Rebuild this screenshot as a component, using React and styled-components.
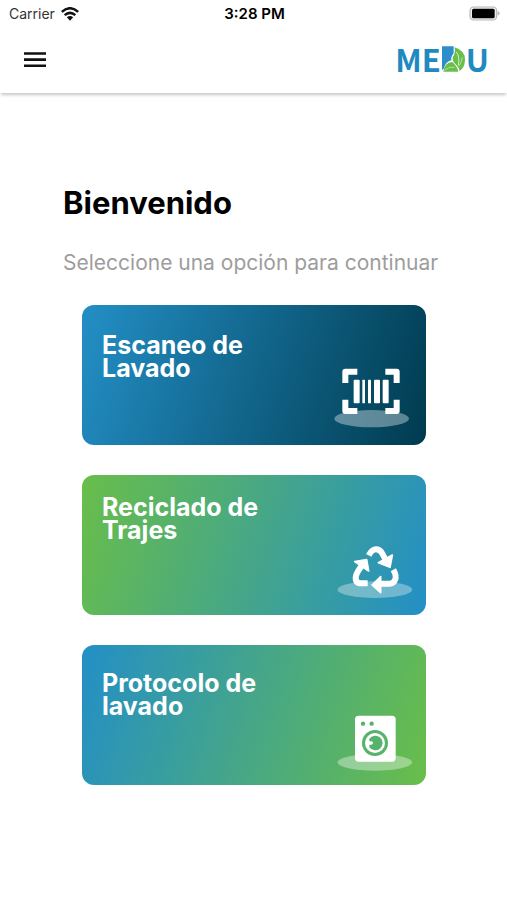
import React from 'react';
import styled, { createGlobalStyle } from 'styled-components';

const blue = '#238fc6';
const green = '#69be49';
const navy = '#003b4f';

export default function App() {
  return (
    <>
      <GlobalStyle />
      <StatusBar>
        <Carrier>
          <span>Carrier</span>
          <WifiIcon />
        </Carrier>
        <Clock>3:28 PM</Clock>
        <BatteryBox>
          <BatteryIcon />
        </BatteryBox>
      </StatusBar>

      <Header>
        <MenuButton type='button' aria-label='Menú'>
          <svg width='24' height='18' viewBox='0 0 24 18' aria-hidden='true'>
            <path d='M1 2.5H23M1 8.6H23M1 14.7H23' stroke='#111' strokeWidth='2.6' />
          </svg>
        </MenuButton>
        <Logo href='#inicio'>
          <span>ME</span>
          <LeafIcon />
          <span>U</span>
        </Logo>
      </Header>

      <Main>
        <Title>Bienvenido</Title>
        <Subtitle>Seleccione una opción para continuar</Subtitle>
        <CardList>
          <Card type='button' $from={blue} $to={navy}>
            <CardTitle $top='29px'>Escaneo de Lavado</CardTitle>
            <BarcodeIcon />
          </Card>
          <Card type='button' $from={green} $to={blue}>
            <CardTitle $top='21px'>Reciclado de Trajes</CardTitle>
            <RecycleIcon />
          </Card>
          <Card type='button' $from={blue} $to={green}>
            <CardTitle $top='27px'>Protocolo de lavado</CardTitle>
            <WasherIcon />
          </Card>
        </CardList>
      </Main>
    </>
  );
}

function WifiIcon() {
  return (
    <svg width='18' height='14' viewBox='0 0 54 42' aria-hidden='true'>
      <g fill='none' stroke='#111' strokeWidth='7.5'>
        <path d='M2.5 14.5Q27 -7 51.5 14.5' />
        <path d='M11 24.5Q27 10.5 43 24.5' />
      </g>
      <path d='M17.5 31Q27 23 36.5 31L27 41Z' fill='#111' />
    </svg>
  );
}

function BatteryIcon() {
  return (
    <svg width='31' height='15' viewBox='0 0 93 45' aria-hidden='true'>
      <rect x='3' y='3' width='80' height='39' rx='11' fill='#eee' stroke='#b5b5b5' strokeWidth='3.5' />
      <rect x='9' y='8' width='68' height='29' rx='5' fill='#000' />
      <path d='M86 15Q92 18 92 22Q92 26 86 29Z' fill='#b5b5b5' />
    </svg>
  );
}

function LeafIcon() {
  return (
    <svg width='25' height='26' viewBox='0 0 75 78' aria-hidden='true'>
      <path d='M3 1H38V22Q29 32 31 43Q14 47 8 68L3 72Z' fill='#2c8fc9' />
      <path
        d='M41 4Q73 14 72 42Q71 65 56 75Q55 66 48 59Q35 48 35 39Q35 32 40 25Q43 17 41 4Z'
        fill={green}
      />
      <path d='M46 18Q57 32 52 58' fill='none' stroke='#d7efca' strokeWidth='3' />
      <path d='M64 34Q62 49 54 61' fill='none' stroke='#d7efca' strokeWidth='2' />
      <path d='M7 77Q11 49 34 48Q49 61 52 77Z' fill={green} />
      <path d='M10 73Q24 60 40 64' fill='none' stroke='#d7efca' strokeWidth='2' />
    </svg>
  );
}

function BarcodeIcon() {
  return (
    <CardIcon viewBox='24 16 240 207' aria-hidden='true'>
      <ellipse cx='140' cy='189' rx='112' ry='26' fill='#fff' fillOpacity='0.36' />
      <g fill='none' stroke='#fff' strokeWidth='18' strokeLinejoin='round'>
        <path d='M61 82V48H97' />
        <path d='M181 48H215V82' />
        <path d='M61 132V166H97' />
        <path d='M181 166H215V132' />
      </g>
      <g fill='#fff'>
        <rect x='86' y='72' width='18' height='71' rx='3' />
        <rect x='112' y='72' width='8' height='71' rx='2' />
        <rect x='129' y='72' width='9' height='71' rx='2' />
        <rect x='147' y='72' width='18' height='71' rx='3' />
        <rect x='173' y='72' width='18' height='71' rx='3' />
      </g>
    </CardIcon>
  );
}

function RecycleIcon() {
  return (
    <CardIcon viewBox='24 -13 240 207' aria-hidden='true'>
      <ellipse cx='149.5' cy='163' rx='112' ry='25' fill='#fff' fillOpacity='0.33' />
      <g fill='none' stroke='#fff' strokeWidth='18'>
        <path d='M131 60Q141 42 153 42Q165 42 172 55L183 75' />
        <path d='M128 144H108Q88 143 93 121Q95 112 110 91' />
        <path d='M205 103Q216 122 210 134Q205 145 194 145H162' />
      </g>
      <g fill='#fff' stroke='#fff' strokeWidth='5' strokeLinejoin='round'>
        <path d='M202 59L195 96L160 82Z' />
        <path d='M89 79L125 73L131 107Z' />
        <path d='M167 124V172L141 149Z' />
      </g>
    </CardIcon>
  );
}

function WasherIcon() {
  return (
    <CardIcon viewBox='24 -11 240 207' aria-hidden='true'>
      <ellipse cx='149.5' cy='173' rx='112' ry='25' fill='#fff' fillOpacity='0.36' />
      <rect x='90' y='33' width='122' height='138' rx='11' fill='#fff' />
      <g fill='#57b36b'>
        <circle cx='114' cy='57' r='6.5' />
        <circle cx='140' cy='57' r='6.5' />
        <circle cx='150' cy='115' r='39' />
      </g>
      <circle cx='150' cy='115' r='30' fill='#fff' />
      <path
        d='M133 102A22 22 0 1 1 133 128L133 120H139Q144 119 144 115Q144 111 139 110H133Z'
        fill='#57b36b'
      />
    </CardIcon>
  );
}

const GlobalStyle = createGlobalStyle`
  * {
    box-sizing: border-box;
  }

  body {
    margin: 0;
    background-color: #fff;
    color: #000;
    font-family: Inter, 'Liberation Sans', sans-serif;
  }
`;

const StatusBar = styled.div`
  display: grid;
  grid-template-columns: 1fr auto 1fr;
  align-items: center;
  height: 27px;
  padding: 0 7px 0 9px;
  font-size: 14px;
`;

const Carrier = styled.div`
  display: flex;
  align-items: center;
  gap: 6px;
  color: #333;
`;

const Clock = styled.span`
  font-size: 15px;
  font-weight: 600;
`;

const BatteryBox = styled.div`
  display: flex;
  justify-content: flex-end;
`;

const Header = styled.header`
  display: flex;
  justify-content: space-between;
  align-items: center;
  height: 66px;
  padding: 0 18px 0 19px;
  box-shadow: 0 3px 3px -1px rgba(0, 0, 0, 0.22);
`;

const MenuButton = styled.button`
  display: flex;
  padding: 4px;
  border: 0;
  background: none;
  cursor: pointer;
`;

const Logo = styled.a`
  display: flex;
  align-items: center;
  padding-bottom: 2px;
  color: #1f8abf;
  font-family: 'Noto Sans CJK SC', 'Liberation Sans', sans-serif;
  font-size: 31px;
  font-weight: 700;
  line-height: 32px;
  text-decoration: none;
`;

const Main = styled.main`
  padding: 90px 62px 40px 63px;
`;

const Title = styled.h1`
  margin: 0;
  font-size: 31px;
  font-weight: 700;
  line-height: 40px;
`;

const Subtitle = styled.p`
  margin: 27px 0 29px;
  color: #9d9d9d;
  font-size: 21px;
  line-height: 26px;
`;

const CardList = styled.div`
  display: flex;
  flex-direction: column;
  gap: 30px;
  padding: 0 19px;
`;

const Card = styled.button`
  display: flex;
  justify-content: space-between;
  align-items: flex-start;
  min-height: 140px;
  padding: 0 13px 15px 20px;
  border: 0;
  border-radius: 12px;
  background: linear-gradient(107deg, ${(props) => props.$from}, ${(props) => props.$to});
  color: #fff;
  font-family: inherit;
  text-align: left;
  cursor: pointer;
`;

const CardTitle = styled.span`
  max-width: 180px;
  padding-top: ${(props) => props.$top};
  font-size: 25px;
  font-weight: 700;
  line-height: 23px;
`;

const CardIcon = styled.svg`
  align-self: flex-end;
  flex-shrink: 0;
  width: 80px;
  height: 69px;
  overflow: visible;
`;
